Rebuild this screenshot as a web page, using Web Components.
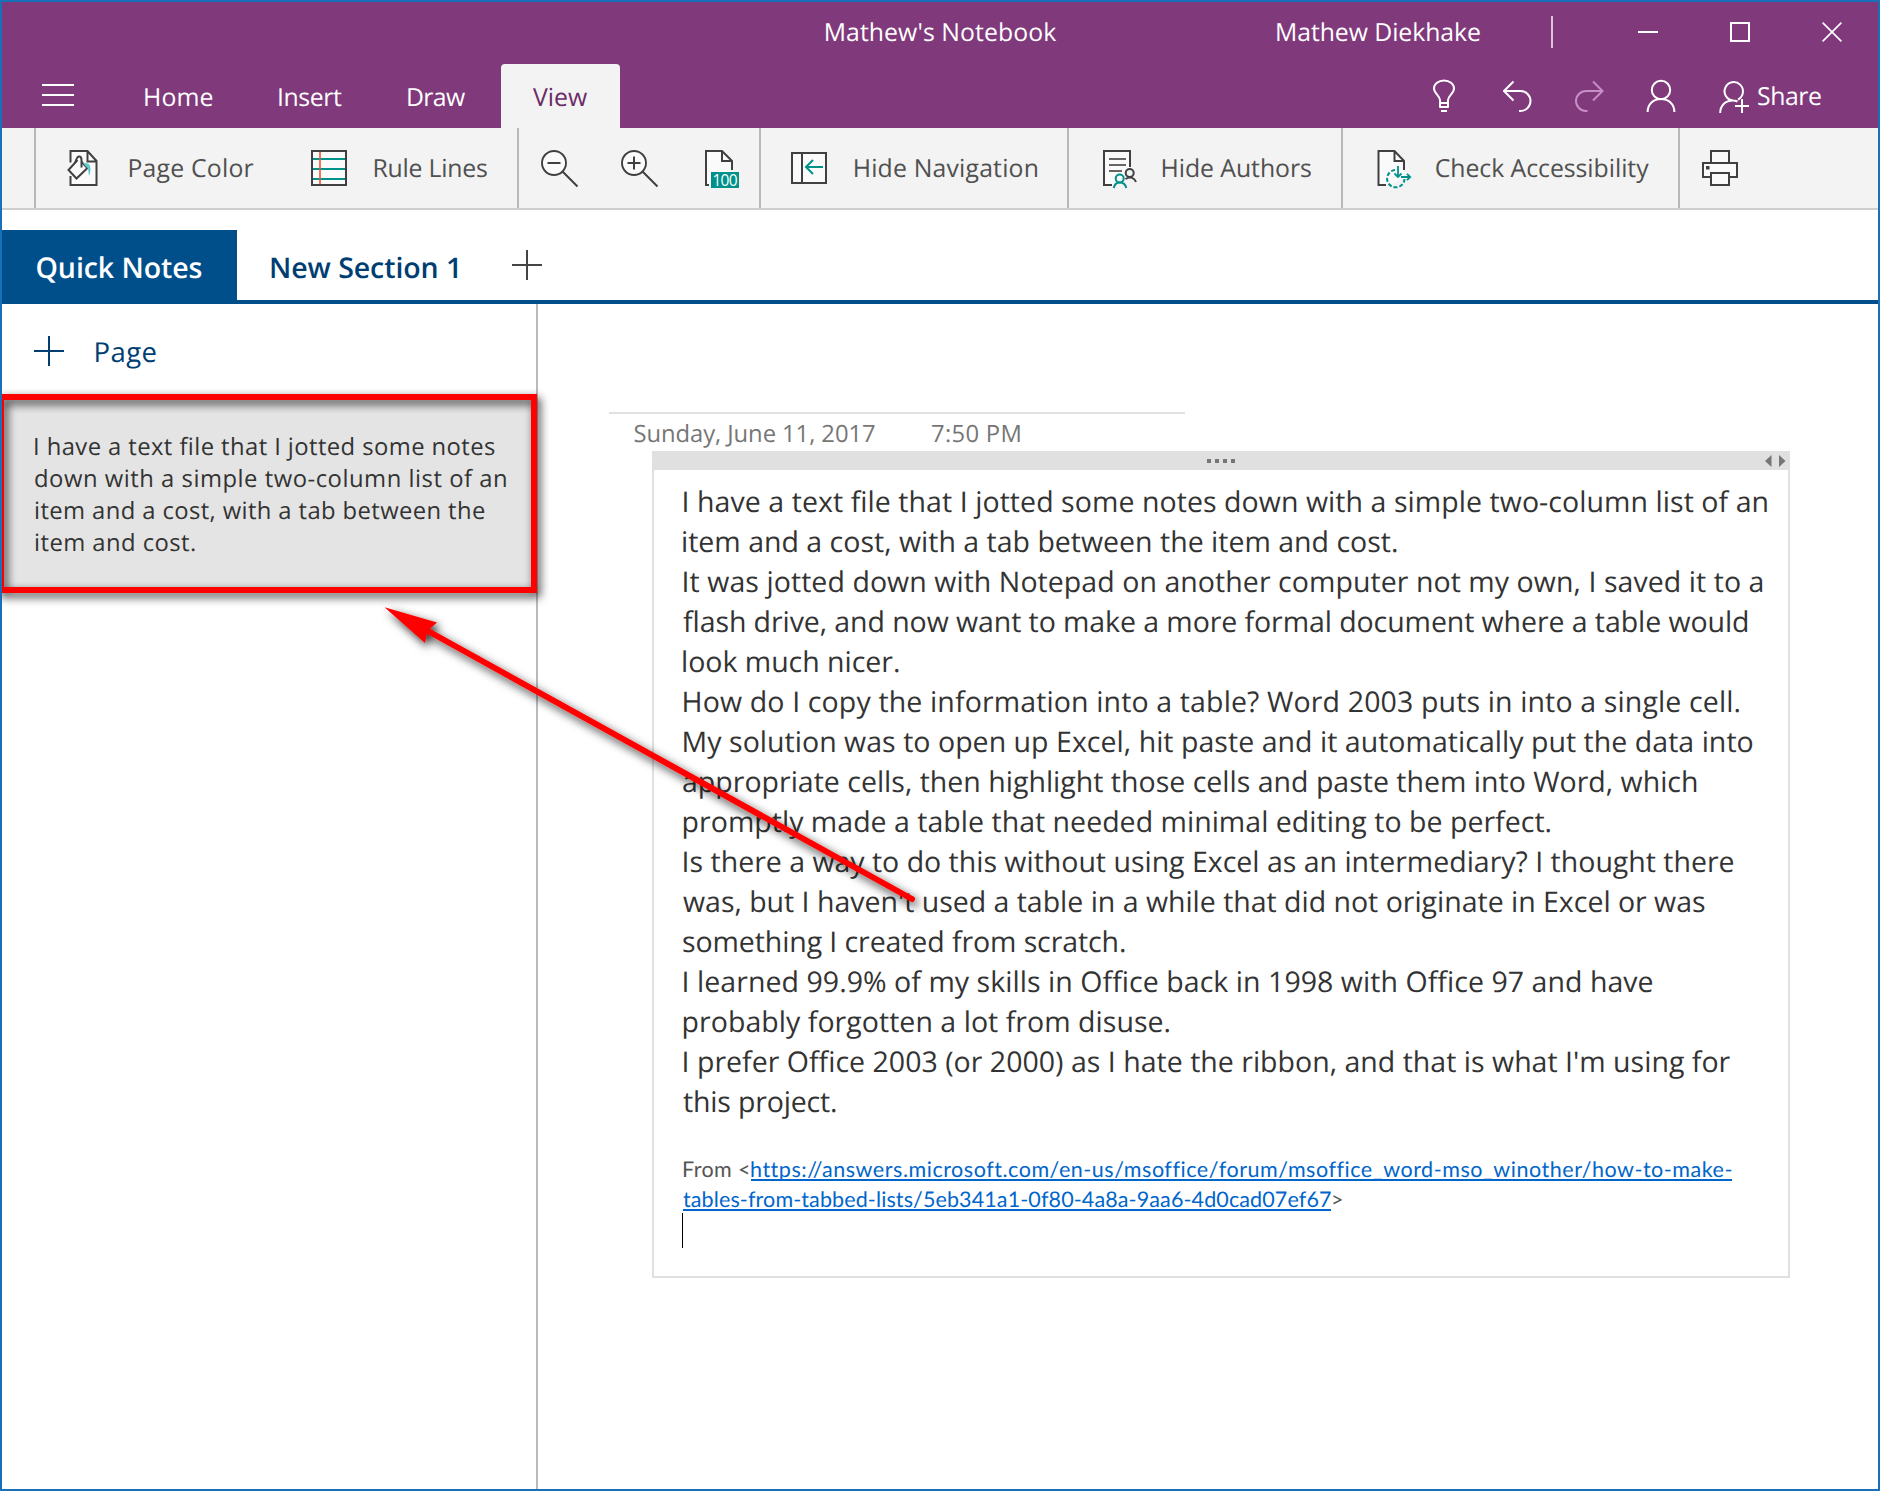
<!DOCTYPE html>
<html lang="en">
<head>
<meta charset="utf-8">
<title>Mathew's Notebook</title>
<style>
  body { margin: 0; background: #fff; font-family: "Open Sans", "Noto Sans", sans-serif; }
</style>
</head>
<body>
<notebook-app></notebook-app>
<script>
const NS = 'font-variant-ligatures:none;text-rendering:geometricPrecision;';

class Base extends HTMLElement {
  constructor() { super(); this.attachShadow({ mode: 'open' }); }
  connectedCallback() { this.shadowRoot.innerHTML = this.render(); }
}

/* One line of text, tracked so that its ink spans exactly `w` pixels. */
class FitText extends HTMLElement {
  constructor() {
    super();
    this.attachShadow({ mode: 'open' }).innerHTML =
      `<style>:host{display:block;flex:none;white-space:nowrap;line-height:var(--lh,32px);${NS}}span{display:inline-block}</style><span><slot></slot></span>`;
  }
  connectedCallback() {
    const w = parseFloat(this.getAttribute('w'));
    this.style.width = w + 'px';
    const span = this.shadowRoot.querySelector('span');
    const text = this.textContent;
    const ctx = FitText.ctx || (FitText.ctx = document.createElement('canvas').getContext('2d'));
    const cs = getComputedStyle(this);
    ctx.font = `${cs.fontWeight} ${cs.fontSize} ${cs.fontFamily}`;
    const lb = -ctx.measureText(text[0]).actualBoundingBoxLeft;
    const last = ctx.measureText(text[text.length - 1]);
    const rb = last.width - last.actualBoundingBoxRight;
    const ink = span.getBoundingClientRect().width - lb - rb;
    span.style.letterSpacing = ((w - ink) / (text.length - 1)) + 'px';
    span.style.marginLeft = -lb + 'px';
  }
}

const D = 'fill="none" stroke="#404040" stroke-width="2"';
const T = 'fill="none" stroke="#00918a" stroke-width="2"';
const W = 'fill="none" stroke="#fff" stroke-width="2"';
const ICONS = {
  min: ['1638 21 20 22', `<path d="M1638 32h20" ${W}/>`],
  max: ['1730 21 20 22', `<rect x="1731" y="23" width="18" height="18" ${W}/>`],
  close: ['1822 21 20 22', `<path d="M1822.6 22.6l18.8 18.8M1841.4 22.6l-18.8 18.8" ${W} style="stroke-width:1.6"/>`],
  menu: ['42 84 32 22', `<path d="M42 85h32M42 95h32M42 105h32" ${W}/>`],
  bulb: ['1433 79 22 34', `<path d="M1440 103v-3c0-4-6-6.500-6-11.500a10 8 0 0 1 20 0c0 5-6 7.500-6 11.500v7h-8v-4h8M1441 111h6" ${W} stroke-linejoin="round"/>`],
  undo: ['1503 79 29 34', `<path d="M1513.500 81.500l-9.500 9.500 9.500 9.500M1504 91h16.500a10 10 0 0 1 0 20h-1.500" ${W}/>`],
  redo: ['1575.500 79 29 34', `<path d="M1593.500 81.500l9.500 9.500-9.500 9.500M1603 91h-16.500a10 10 0 0 0 0 20h1.500" fill="none" stroke="#c78fc5" stroke-width="2"/>`],
  person: ['1646 79 30 34', `<circle cx="1661" cy="90" r="9.200" ${W}/><path d="M1647.600 112c0-8 6-13 13.400-13s13.400 5 13.400 13" ${W}/>`],
  share: ['1719 80 31 34', `<path d="M1738 99.500a9.200 9.200 0 1 0-5 1M1720.200 113c0-7.500 5-12.500 12.800-12.500 2 0 3 .3 4.500 1M1735 106h14M1742 99v14" ${W}/>`],
  pageColor: ['66.500 148 34 40', `<path d="M71 162v-11h17l9 10v24H71v-11z" fill="#fafafa"/><path d="M71 162.500V151h17l9 10v24H71v-9M88 151v10.500h9" ${D}/><path d="M78 160l-9 10 8 8.500 11-10.500-6-6" fill="#fafafa" stroke="#404040" stroke-width="2"/><path d="M75.500 163l1.500-4c1.500-4 5-3 5 1v7.500" ${D}/><path d="M83.500 163.500c5-1.500 8 1.500 7.500 6.500l-1 5.500c-2-3 0-6-3-8.500z" fill="#5fcbce"/>`],
  ruleLines: ['310 148 38 40', `<rect x="312" y="151" width="34" height="34" fill="#fafafa"/><path d="M312 159h34M312 169h34M312 179h34" ${T}/><path d="M320 151v34" stroke="#f0562b" stroke-width="1.600"/><rect x="312" y="151" width="34" height="34" ${D}/>`],
  zoomOut: ['540 148 40 40', `<circle cx="554" cy="163" r="12" fill="#fafafa" stroke="#404040" stroke-width="1.900"/><path d="M547.500 163h13M562.500 171.500l15 15" ${D}/>`],
  zoomIn: ['620 148 40 40', `<circle cx="634" cy="163" r="12" fill="#fafafa" stroke="#404040" stroke-width="1.900"/><path d="M627.500 163h13M634 156.500v13M642.500 171.500l15 15" ${D}/>`],
  page100: ['703 148 38 42', `<path d="M706 151h16l10 10v24h-26z" fill="#fafafa"/><path d="M709 185h-3V151h16l10 10v9M722 151v10h10" ${D}/><rect x="711" y="172" width="28" height="16" fill="#00918a"/><text x="712.500" y="186" font-size="15.500" textLength="25" fill="#fff" font-family="Open Sans">100</text>`],
  hideNav: ['790 148 38 40', `<rect x="792" y="153" width="34" height="30" fill="#fafafa" stroke="#404040" stroke-width="2"/><path d="M802 153v30" ${D}/><path d="M823 167h-17M813 160l-7 7 7 7" ${T}/>`],
  authors: ['1101 148 38 42', `<path d="M1104 151h26v17l-15 17h-11z" fill="#fafafa"/><path d="M1112 185h-8V151h26v16" ${D}/><path d="M1109 159h17M1109 165h17M1109 171h13" fill="none" stroke="#666" stroke-width="1.800"/><circle cx="1129.700" cy="173" r="4" ${D}/><path d="M1125.500 179c5-3 9-1 10.500 3" ${D}/><circle cx="1119.700" cy="178.500" r="4" ${T}/><path d="M1113.800 188c1-7.500 11-7.500 12.500 0" ${T}/>`],
  access: ['1376 148 36 42', `<path d="M1378.500 151h16l9.500 10v17l-14 7h-11.500z" fill="#fafafa"/><path d="M1386 185h-7.500V151h16l9.500 10v9M1394.500 151v10h9.500" ${D}/><path d="M1395 170a8.700 8.700 0 1 0 9.500 9" ${T} stroke-dasharray="4 2"/><path d="M1398 166v11M1394.500 173.500l3.500 3.500 3.500-3.500M1401 177h9M1407 173.800l3.200 3.200-3.200 3.200" ${T} style="stroke-width:1.800"/>`],
  print: ['1700 148 40 40', `<path d="M1711 163V151h18v12" fill="#fafafa" stroke="#404040" stroke-width="2"/><path d="M1711 177h-8v-14h34v14h-8" fill="#fafafa" stroke="#404040" stroke-width="2"/><rect x="1711" y="173" width="18" height="12" fill="#fafafa" stroke="#404040" stroke-width="2"/><rect x="1706" y="166" width="3.500" height="3.500" fill="#404040"/>`],
  plus: ['0 0 30 30', `<path d="M0 15h30M15 0v30" fill="none" stroke="currentColor" stroke-width="2"/>`]
};

class UiIcon extends Base {
  render() {
    const [vb, body] = ICONS[this.getAttribute('name')];
    const [, , w, h] = vb.split(' ');
    return `<style>:host{display:block;flex:none;width:${w}px;height:${h}px}svg{display:block}</style><svg width="${w}" height="${h}" viewBox="${vb}">${body}</svg>`;
  }
}

class TitleBar extends Base {
  render() {
    return `<style>
      :host{display:flex;align-items:flex-start;height:62px;background:#80397b;color:#fff;font-size:24.8px}
      i{width:2px;height:32px;background:#dcc3da;margin:14px 0 0 71px}
      ui-icon{margin:19px 0 0 72px}
    </style>
    <fit-text w="230.5" style="margin:14px 0 0 823.700px">Mathew's Notebook</fit-text>
    <fit-text w="203" style="margin:14px 0 0 220.800px">Mathew Diekhake</fit-text>
    <i></i>
    <ui-icon name="min" style="margin-left:85px"></ui-icon>
    <ui-icon name="max"></ui-icon><ui-icon name="close"></ui-icon>`;
  }
}

class TabBar extends Base {
  render() {
    return `<style>
      :host{display:flex;align-items:flex-start;height:64px;background:#80397b;color:#fff;font-size:24.8px}
      fit-text{margin-top:17px}
      .on{width:119px;height:64px;box-sizing:border-box;padding-left:32px;margin-left:36px;background:#f3f3f3;color:#6b2c68;border-radius:4px 4px 0 0;display:flex;align-items:flex-start}
      ui-icon{margin-top:15px}
    </style>
    <ui-icon name="menu" style="margin:20px 0 0 40px"></ui-icon>
    <fit-text w="67.5" style="margin-left:71px">Home</fit-text>
    <fit-text w="63" style="margin-left:66.500px">Insert</fit-text>
    <fit-text w="57" style="margin-left:66px">Draw</fit-text>
    <div class="on"><fit-text w="54">View</fit-text></div>
    <ui-icon name="bulb" style="margin-left:813px"></ui-icon>
    <ui-icon name="undo" style="margin-left:48px"></ui-icon>
    <ui-icon name="redo" style="margin-left:43px"></ui-icon>
    <ui-icon name="person" style="margin-left:42px"></ui-icon>
    <ui-icon name="share" style="margin:16px 0 0 43px"></ui-icon>
    <fit-text w="63" style="margin:16px 0 0 8px">Share</fit-text>`;
  }
}

class RibbonGroup extends Base {
  render() {
    return `<style>:host{display:flex;flex:none;align-items:flex-start;box-sizing:border-box;height:80px;border-left:2px solid #b8b8b8;width:${this.getAttribute('w')}px}</style><slot></slot>`;
  }
}

class RibbonBar extends Base {
  render() {
    return `<style>
      :host{display:flex;height:80px;padding-left:32px;background:#f3f3f3;border-bottom:2px solid #cfcfcf;color:#505050;font-size:24.8px}
      ui-icon{margin-top:20px} fit-text{margin-top:23.900px}
    </style>
    <ribbon-group w="483">
      <ui-icon name="pageColor" style="margin-left:30px"></ui-icon><fit-text w="124" style="margin-left:29.500px">Page Color</fit-text>
      <ui-icon name="ruleLines" style="margin-left:56.500px"></ui-icon><fit-text w="112.5" style="margin-left:26.500px">Rule Lines</fit-text>
    </ribbon-group>
    <ribbon-group w="242">
      <ui-icon name="zoomOut" style="margin-left:21px"></ui-icon><ui-icon name="zoomIn" style="margin-left:40px"></ui-icon><ui-icon name="page100" style="margin-left:43px"></ui-icon>
    </ribbon-group>
    <ribbon-group w="308"><ui-icon name="hideNav" style="margin-left:29px"></ui-icon><fit-text w="183" style="margin-left:26.700px">Hide Navigation</fit-text></ribbon-group>
    <ribbon-group w="274"><ui-icon name="authors" style="margin-left:32px"></ui-icon><fit-text w="148.5" style="margin-left:23.500px">Hide Authors</fit-text></ribbon-group>
    <ribbon-group w="337"><ui-icon name="access" style="margin-left:33px"></ui-icon><fit-text w="213.5" style="margin-left:23.700px">Check Accessibility</fit-text></ribbon-group>
    <ribbon-group w="190"><ui-icon name="print" style="margin-left:20px"></ui-icon></ribbon-group>`;
  }
}

class SectionTabs extends Base {
  render() {
    return `<style>
      :host{display:flex;align-items:flex-start;height:70px;padding-top:20px;border-bottom:4px solid #004f8b;font-size:28.5px;font-weight:600;color:#003e72}
      .on{display:flex;width:235px;height:70px;background:#004f8b;color:#fff;box-sizing:border-box;padding-left:34.5px}
      fit-text{margin-top:22px}
    </style>
    <div class="on"><fit-text w="165">Quick Notes</fit-text></div>
    <fit-text w="186" style="margin-left:34px">New Section 1</fit-text>
    <ui-icon name="plus" style="margin:20px 0 0 55px;color:#444"></ui-icon>`;
  }
}

class PageList extends Base {
  render() {
    return `<style>
      :host{display:block;flex:none;width:534px;border-right:2px solid #bababa;font-size:23.800px;color:#333}
      .add{display:flex;align-items:flex-start;height:93px;color:#003e72;font-size:27.500px}
      .item{height:193px;box-sizing:border-box;background:#e4e4e4;padding:33px 0 0 33px}
    </style>
    <div class="add"><ui-icon name="plus" style="margin:32px 0 0 32px"></ui-icon><fit-text w="60" style="margin:33px 0 0 31.500px">Page</fit-text></div>
    <div class="item">
      <fit-text w="460">I have a text file that I jotted some notes</fit-text>
      <fit-text w="471">down with a simple two-column list of an</fit-text>
      <fit-text w="450">item and a cost, with a tab between the</fit-text>
      <fit-text w="160">item and cost.</fit-text>
    </div>`;
  }
}

const LINES = [
  [1084, 'I have a text file that I jotted some notes down with a simple two-column list of an'],
  [714, 'item and a cost, with a tab between the item and cost.'],
  [1079, 'It was jotted down with Notepad on another computer not my own, I saved it to a'],
  [1064, 'flash drive, and now want to make a more formal document where a table would'],
  [216, 'look much nicer.'],
  [1056, 'How do I copy the information into a table? Word 2003 puts in into a single cell.'],
  [1069, 'My solution was to open up Excel, hit paste and it automatically put the data into'],
  [1014, 'appropriate cells, then highlight those cells and paste them into Word, which'],
  [867, 'promptly made a table that needed minimal editing to be perfect.'],
  [1050, 'Is there a way to do this without using Excel as an intermediary? I thought there'],
  [1022, 'was, but I haven\'t used a table in a while that did not originate in Excel or was'],
  [442, 'something I created from scratch.'],
  [969, 'I learned 99.9% of my skills in Office back in 1998 with Office 97 and have'],
  [486, 'probably forgotten a lot from disuse.'],
  [1047, 'I prefer Office 2003 (or 2000) as I hate the ribbon, and that is what I\'m using for'],
  [153, 'this project.']
];

class NoteBox extends Base {
  render() {
    return `<style>
      :host{display:block;box-sizing:border-box;width:1138px;height:827px;border:2px solid #e0e0e0;border-top:0;color:#333;font-size:28.5px;--lh:40px}
      header{display:flex;align-items:center;height:19px;margin:0 -2px;background:#e0e0e0;color:#767676}
      header svg{display:block}
      .body{padding:11.600px 0 0 29px}
      .src{display:flex;height:30px;font:21.500px Lato,"Open Sans",sans-serif;--lh:30px;color:#555}
      a{display:block;height:25px;border-bottom:2px solid #0066cc;color:#0066cc}
      .caret{width:1px;height:35px;background:#000;margin:-1px 0 0 -1px}
    </style>
    <header><svg width="1138" height="19"><path d="M555 8h4v4h-4zM563 8h4v4h-4zM571 8h4v4h-4zM579 8h4v4h-4zM1119.500 4v12l-6.500-6zM1127 4v12l6.500-6z" fill="#767676"/></svg></header>
    <div class="body">${LINES.map(([w, t]) => `<fit-text w="${w}"${/^[IHMp]/.test(t) ? ' style="margin-left:.6px"' : ''}>${t}</fit-text>`).join('')}
      <div class="src" style="margin-top:32.400px"><fit-text w="66">From &lt;</fit-text><a style="margin-left:2px"><fit-text w="980.5">https://answers.microsoft.com/en-us/msoffice/forum/msoffice_word-mso_winother/how-to-make-</fit-text></a></div>
      <div class="src"><a><fit-text w="648">tables-from-tabbed-lists/5eb341a1-0f80-4a8a-9aa6-4d0cad07ef67</fit-text></a><span style="line-height:30px">&gt;</span></div>
      <div class="caret"></div>
    </div>`;
  }
}

class NoteCanvas extends Base {
  render() {
    return `<style>
      :host{display:block;flex:1}
      .rule{width:576px;height:2px;background:#e1e1e1;margin:108px 0 0 71px}
      .date{display:flex;height:37px;color:#767676;font-size:23.800px;margin-left:96.500px}
      fit-text{margin-top:2.800px}
      note-box{margin-left:114px}
    </style>
    <div class="rule"></div>
    <div class="date"><fit-text w="240.5">Sunday, June 11, 2017</fit-text><fit-text w="88.5" style="margin-left:57px">7:50 PM</fit-text></div>
    <note-box></note-box>`;
  }
}

/* Red frame and arrow that float over the window. */
class CalloutLayer extends Base {
  render() {
    return `<style>:host{position:absolute;left:0;top:0;width:1880px;height:1491px;overflow:hidden}svg{display:block}</style>
    <svg width="1880" height="1491">
      <defs><filter id="s" filterUnits="userSpaceOnUse" x="-40" y="340" width="1100" height="640"><feDropShadow dx="3" dy="4" stdDeviation="5" flood-color="#000" flood-opacity=".8"/></filter></defs>
      <g filter="url(#s)"><rect x="1" y="397" width="533" height="193" fill="none" stroke="#f00" stroke-width="6"/></g>
      <g filter="url(#s)"><path d="M427 630.500L912 899" stroke="#f00" stroke-width="6" stroke-linecap="round"/><path d="M384.500 607.300L437 622.500 427.500 631 425 643z" fill="#f00"/></g>
    </svg>`;
  }
}

class NotebookApp extends Base {
  render() {
    return `<style>
      :host{display:flex;flex-direction:column;position:relative;box-sizing:border-box;width:1880px;height:1491px;border:2px solid #1a70b8;background:#fff;overflow:hidden}
      main{display:flex;flex:1;min-height:0}
      callout-layer{margin:-2px}
    </style>
    <title-bar></title-bar><tab-bar></tab-bar><ribbon-bar></ribbon-bar><section-tabs></section-tabs>
    <main><page-list></page-list><note-canvas></note-canvas></main>
    <callout-layer></callout-layer>`;
  }
}

customElements.define('fit-text', FitText);
customElements.define('ui-icon', UiIcon);
customElements.define('ribbon-group', RibbonGroup);
customElements.define('title-bar', TitleBar);
customElements.define('tab-bar', TabBar);
customElements.define('ribbon-bar', RibbonBar);
customElements.define('section-tabs', SectionTabs);
customElements.define('page-list', PageList);
customElements.define('note-box', NoteBox);
customElements.define('note-canvas', NoteCanvas);
customElements.define('callout-layer', CalloutLayer);
customElements.define('notebook-app', NotebookApp);
</script>
</body>
</html>
